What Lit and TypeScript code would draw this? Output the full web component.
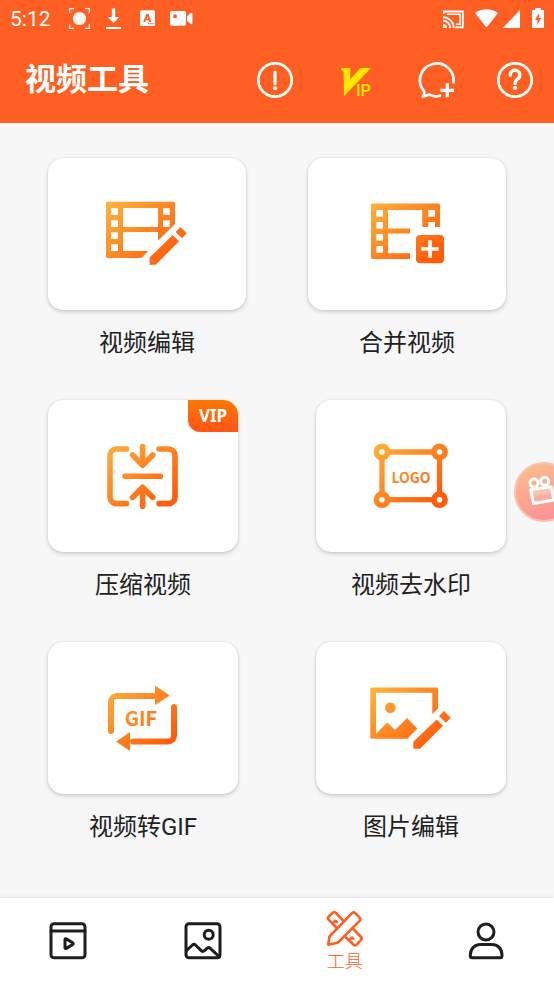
import { LitElement, html, css, svg, nothing } from "lit";
import type { SVGTemplateResult } from "lit";
import { customElement, property, state } from "lit/decorators.js";
import { classMap } from "lit/directives/class-map.js";

interface Tool {
  label: string;
  icon: string;
  vip?: boolean;
}

const TOOL_ROWS: { wide: boolean; tools: Tool[] }[] = [
  { wide: true, tools: [{ label: "视频编辑", icon: "edit" }, { label: "合并视频", icon: "merge" }] },
  { wide: false, tools: [{ label: "压缩视频", icon: "compress", vip: true }, { label: "视频去水印", icon: "logo" }] },
  { wide: false, tools: [{ label: "视频转GIF", icon: "gif" }, { label: "图片编辑", icon: "picture" }] },
];

const TOOL_ICONS: Record<string, SVGTemplateResult> = {
  edit: svg`
    <path fill="url(#g)" fill-rule="evenodd" d="M8.5 7.7H74.5A1.5 1.5 0 0 1 76 9.2V30L59 46.7V38H24V57H49.3L42.3 64H8.5A1.5 1.5 0 0 1 7 62.5V9.2A1.5 1.5 0 0 1 8.5 7.7Z
      M12 14.3V21H19V14.3Z M12 26.3V33H19V26.3Z M12 38.3V45H19V38.3Z M12 50.3V57H19V50.3Z
      M24 14V33H59V14Z M64 14.3V21H70.7V14.3Z M64 26.3V33H70.7V26.3Z"/>
    <path fill="url(#g)" d="M50.7 71V63.5L73.7 41L80 47.3L57 70.5Z M76.7 38L81.3 33L87.7 39.3L83 44.3Z"/>`,
  merge: svg`
    <path fill="url(#g)" fill-rule="evenodd" d="M13.5 9.5H79.5A1.5 1.5 0 0 1 81 11V33H76V28H69.3V33H63.3V16H29V34.500H51V39.600H29V59.300H51V65H13.5A1.5 1.5 0 0 1 12 63.5V11A1.5 1.5 0 0 1 13.5 9.5Z
      M17.3 16V22.7H24V16Z M17.3 28V34.7H24V28Z M17.3 40V46.7H24V40Z M17.3 52V58.7H24V52Z M69.3 16V22.7H76V16Z"/>
    <rect fill="url(#g)" x="57" y="41" width="28" height="28.3" rx="4"/>
    <path stroke="#fff" stroke-width="3.6" d="M62.3 55H79.7M71 46.3V63.7"/>`,
  compress: svg`
    <path fill="none" stroke="url(#g)" stroke-width="5.6" stroke-linecap="round" stroke-linejoin="round"
      d="M31.5 13H21.5A6.5 6.5 0 0 0 15 19.5V61A6.5 6.5 0 0 0 21.5 67.6H31.5M64 13H73.5A6.5 6.5 0 0 1 80 19.5V61A6.5 6.5 0 0 1 73.5 67.6H64
      M47.6 10.5V29M37.5 19L47.6 29.2L57.8 19M30 40.2H65.3M47.6 70.3V51.5M37.5 61.4L47.6 51.3L57.8 61.4"/>`,
  logo: svg`
    <path fill="none" stroke="url(#g)" stroke-width="5.3" d="M24.5 16H71M24.5 63.7H71M19 21.5V58M76.5 21.5V58"/>
    <g fill="none" stroke="url(#g)" stroke-width="5.6">
      <circle cx="19" cy="16" r="5.6"/><circle cx="76.5" cy="16" r="5.6"/>
      <circle cx="19" cy="63.7" r="5.6"/><circle cx="76.5" cy="63.7" r="5.6"/>
    </g>
    <text class="word" x="48" y="47" font-size="14" text-anchor="middle" fill="url(#g)">LOGO</text>`,
  gif: svg`
    <path fill="none" stroke="url(#g)" stroke-width="6" stroke-linecap="round" d="M16 53V24A6 6 0 0 1 22 18H58M79 29V57.500A6 6 0 0 1 73 63.500H38"/>
    <path fill="url(#g)" d="M60 7.500L74.7 17.500L60 27Z M35 54L21 63.500L35 73Z"/>
    <text class="word" x="46" y="48" font-size="20" text-anchor="middle" fill="url(#g)">GIF</text>`,
  picture: svg`
    <g transform="translate(0 0.700)">
      <path fill="url(#g)" fill-rule="evenodd" d="M8.8 8.7H73.5A1.5 1.5 0 0 1 75 10.2V29.7L69.3 35.4V14H13V55L24.3 43.7L32 51.3L44 39.3L54.3 49.7L44.3 60H8.8A1.5 1.5 0 0 1 7.3 58.5V10.2A1.5 1.5 0 0 1 8.8 8.7Z"/>
      <circle fill="url(#g)" cx="27.3" cy="29" r="5.3"/>
      <path fill="url(#g)" d="M50.3 70V63L73.7 40.7L80 47L57 70Z M76 37.3L81 32.3L87.7 39L82.7 44Z"/>
    </g>`,
};

@customElement("tool-tile")
class ToolTile extends LitElement {
  @property({ attribute: false }) tool!: Tool;

  static styles = css`
    :host { display: block; flex: 1; min-width: 0; }
    .tile {
      display: flex; flex-direction: column; align-items: center; gap: 16px;
      width: 100%; padding: 0; border: 0; background: none; cursor: pointer;
      font: inherit; color: #222;
    }
    .card {
      position: relative; display: flex; align-items: center; justify-content: center;
      width: 100%; height: 152px; border-radius: 15px; background: #fff;
      box-shadow: 0 2px 4px rgba(0, 0, 0, 0.16), 0 0 2px rgba(0, 0, 0, 0.12);
    }
    .icon { width: 96px; height: 80px; display: block; }
    .word { font-family: "Noto Sans CJK SC", sans-serif; font-weight: 700; }
    .badge {
      position: absolute; top: 0; right: 0; width: 50px; height: 32px;
      display: flex; align-items: center; justify-content: center;
      border-radius: 0 15px 0 12px; background: linear-gradient(#ff7800, #ff5518);
      color: #fff; font: 700 17px/32px "Noto Sans", sans-serif;
    }
    .label { font-size: 24px; line-height: 34px; white-space: nowrap; }
  `;

  render() {
    return html`
      <button class="tile" type="button">
        <span class="card">
          <svg class="icon" viewBox="0 0 96 80" aria-hidden="true">
            <defs>
              <linearGradient id="g" gradientUnits="userSpaceOnUse" x1="14" y1="8" x2="70" y2="68">
                <stop offset="0" stop-color="#ffb03a"/><stop offset="1" stop-color="#ff5c0c"/>
              </linearGradient>
            </defs>
            ${TOOL_ICONS[this.tool.icon]}
          </svg>
          ${this.tool.vip ? html`<span class="badge">VIP</span>` : nothing}
        </span>
        <span class="label">${this.tool.label}</span>
      </button>`;
  }
}

@customElement("status-bar")
class StatusBar extends LitElement {
  static styles = css`
    :host { display: flex; justify-content: space-between; height: 37px; padding: 0 4px 0 10px; color: #fff; }
    .group { display: flex; align-items: center; gap: 10px; }
    .signals { gap: 4px; }
    .time { min-width: 48px; font: 400 21px/38px Roboto, sans-serif; }
    svg { display: block; height: 24px; fill: currentColor; }
  `;

  render() {
    return html`
      <div class="group">
        <span class="time">5:12</span>
        <svg width="24" viewBox="0 0 24 24">
          <circle cx="11.5" cy="11.5" r="6.6" opacity="0.93"/>
          <path fill="none" stroke="currentColor" stroke-width="1.3" d="M1.6 6V1.6H6M17 1.6H21.4V6M21.4 17V21.4H17M6 21.4H1.6V17"/>
        </svg>
        <svg width="24" viewBox="0 0 24 24">
          <path d="M9.8 1.5H13.2V10H17.2L11.5 16L5.8 10H9.8Z M4 20H19V22H4Z"/>
        </svg>
        <svg width="24" viewBox="0 0 24 24">
          <path fill-rule="evenodd" d="M5.5 3.3H17.5A1.5 1.5 0 0 1 19 4.8V17.5A1.5 1.5 0 0 1 17.5 19H5.5A1.5 1.5 0 0 1 4 17.5V4.8A1.5 1.5 0 0 1 5.5 3.3Z
            M10.3 6.8L7.2 15H9.2L9.8 13.3H12.8L13.4 15H15.4L12.4 6.8Z M11.3 9.2L12.2 11.8H10.4Z
            M12 16V17.3H13.3V16Z M14.3 16V17.3H15.6V16Z M16.5 16V17.3H17.8V16Z"/>
        </svg>
        <svg width="24" viewBox="0 0 24 24">
          <path fill-rule="evenodd" d="M1.5 4H14.5A1.5 1.5 0 0 1 16 5.5V17A1.5 1.5 0 0 1 14.5 18.7H1.5A1.5 1.5 0 0 1 0 17V5.5A1.5 1.5 0 0 1 1.5 4Z
            M5 7.3A2 2 0 1 0 5 11.3A2 2 0 1 0 5 7.3Z"/>
          <path d="M17 9.5L20.5 6Q22.5 5 22.5 7V16Q22.5 18 20.5 17L17 13.5Z"/>
        </svg>
      </div>
      <div class="group signals">
        <svg width="24" viewBox="0 0 24 24">
          <path fill="none" stroke="currentColor" stroke-width="1.9" d="M1.8 7V4.500H20.8V20.2H13.5M1 10.2A10.8 10.8 0 0 1 11.8 21M1 13.8A7.2 7.2 0 0 1 8.2 21"/>
          <path fill="none" stroke="currentColor" stroke-width="1.6" d="M5 7.2H18V17.2H14"/>
          <path d="M1 17A4 4 0 0 1 5 21H1Z"/>
        </svg>
        <svg width="28" viewBox="0 0 28 24">
          <path d="M5 6Q16.5 -1.5 28 6L17.5 19.3Q16.5 20.6 15.5 19.3Z"/>
        </svg>
        <svg width="20" viewBox="0 0 20 24"><path d="M.7 21L18 3V21Z"/></svg>
        <svg width="24" viewBox="0 0 24 24">
          <path fill-rule="evenodd" d="M9 1H15V3H17A1 1 0 0 1 18 4V20A1 1 0 0 1 17 21H7A1 1 0 0 1 6 20V4A1 1 0 0 1 7 3H9Z M13 6L9 13H11.3V18L15.2 11H13Z"/>
        </svg>
      </div>`;
  }
}

interface Tab {
  id: string;
  label: string;
  icon: SVGTemplateResult;
}

const TABS: Tab[] = [
  {
    id: "video", label: "视频",
    icon: svg`<rect x="3" y="2.7" width="34" height="34" rx="3"/><path d="M3 10H37M17 18.6Q17 17.2 18.3 17.9L24.7 21.8Q25.8 22.7 24.7 23.5L18.3 27.4Q17 28 17 26.7Z"/>`,
  },
  {
    id: "image", label: "图片",
    icon: svg`<rect x="3" y="2.7" width="34" height="34" rx="3"/><circle cx="25.7" cy="13.7" r="4.5"/><path d="M3.5 29.5L9.5 24Q11 22.8 12.5 24L18.5 29.8Q20 31 21.2 29.8L24.2 27.2Q25.7 26 27 27.2L36.5 36"/>`,
  },
  {
    id: "tools", label: "工具",
    icon: svg`<path stroke-width="2.6" d="M18.8 13.3L11 5Q9.3 3.2 7.7 4.8L3.8 8.5Q2.2 10.1 3.8 11.8L11.8 20M28.8 21.5L36 29Q37.3 30.4 36 31.9L31.5 36.8Q30 38 28.6 36.8L20.8 29.2
      M27 5.2Q28.7 3.7 30.3 5.2L34.6 9.7Q36 11.3 34.6 12.8L14 33.5Q12.500 35 10.500 35.300L3.200 36.600L4.5 28.500Z M7.5 15.5L10.3 12.8L12 14M24 32.3L27 29.5L28.2 30.7"/>`,
  },
  {
    id: "me", label: "我的",
    icon: svg`<circle cx="20" cy="11" r="8"/><path d="M4.3 34C4.3 27.5 9 23.5 14.5 23.5H25.8C31.5 23.5 36 27.5 36 34V34.7A2 2 0 0 1 34 36.7H6.3A2 2 0 0 1 4.3 34.7Z"/>`,
  },
];

@customElement("app-root")
class AppRoot extends LitElement {
  @state() private active = "tools";

  static styles = css`
    :host {
      position: relative; display: flex; flex-direction: column; min-height: 100vh; overflow: hidden;
      background: #f7f7f7; font-family: Roboto, "Noto Sans CJK SC", sans-serif;
    }
    button { padding: 0; border: 0; background: none; font: inherit; color: inherit; cursor: pointer; }
    svg { display: block; }
    .top { background: #ff5f22; color: #fff; }
    .bar { display: flex; align-items: center; justify-content: space-between; height: 86px; padding: 0 19px 0 25px; }
    .title { margin: 0; font-size: 31px; line-height: 42px; font-weight: 700; }
    .actions { display: flex; gap: 40px; }
    .action { width: 40px; height: 40px; }
    .line { fill: none; stroke: currentColor; stroke-width: 2.7; stroke-linecap: round; stroke-linejoin: round; }
    .vip { fill: #ffe600; }
    .vip text { font: 500 16px Roboto, sans-serif; }
    .content { flex: 1; display: flex; flex-direction: column; gap: 40px; padding: 35px 48px; }
    .row { display: flex; gap: 78px; }
    .row.wide { gap: 62px; }
    .float {
      position: absolute; top: 50%; right: -20px; width: 60px; height: 60px; margin-top: -30px;
      border-radius: 50%; border: 2px solid #fac3ad; box-sizing: border-box;
      background: linear-gradient(160deg, #fbbb8c 10%, #fa9296 90%);
    }
    .tabs { display: flex; height: 86px; background: #fff; box-shadow: 0 0 4px rgba(0, 0, 0, 0.14); color: #1d1d1f; }
    .tab { flex: 11; display: flex; flex-direction: column; align-items: center; justify-content: center; gap: 2px; }
    .tab.active { flex: 12; color: #ff5f22; }
    .tab svg { fill: none; stroke: currentColor; stroke-width: 3; stroke-linecap: round; stroke-linejoin: round; }
    .tab-label { font-size: 18px; line-height: 24px; font-weight: 300; }
  `;

  render() {
    return html`
      <header class="top">
        <status-bar></status-bar>
        <div class="bar">
          <h1 class="title">视频工具</h1>
          <div class="actions">
            <button class="action" type="button" aria-label="提示">
              <svg width="40" height="40" viewBox="0 0 40 40">
                <circle class="line" cx="20" cy="20" r="16.7"/>
                <path fill="none" stroke="#fff" stroke-width="3.2" stroke-linecap="round" d="M20 12.3V23.7"/><circle cx="20" cy="28.3" r="2" fill="#fff"/>
              </svg>
            </button>
            <button class="action" type="button" aria-label="VIP">
              <svg class="vip" width="40" height="40" viewBox="0 0 40 40">
                <path d="M6.3 8H15.3V19.3L25.5 8H36L9 36.3L8.6 11.5L6.3 10.3Z"/>
                <text x="21" y="36">IP</text>
              </svg>
            </button>
            <button class="action" type="button" aria-label="反馈">
              <svg width="40" height="40" viewBox="0 0 40 40">
                <path class="line" d="M38.4 22.5A16.8 16.8 0 1 0 9.3 31.5C9.6 33.5 8.6 35.3 7.8 36.5C10.5 36.5 12 35 14.5 34.6C17.5 36.3 21 36.9 25 35.7"/>
                <path fill="none" stroke="#fff" stroke-width="3.2" d="M25.5 30.3H39M32.3 23.3V37.3"/>
              </svg>
            </button>
            <button class="action" type="button" aria-label="帮助">
              <svg width="40" height="40" viewBox="0 0 40 40">
                <circle class="line" cx="20" cy="20" r="16.7"/>
                <path fill="none" stroke="#fff" stroke-width="3.4" stroke-linecap="round" d="M15.2 15.2A4.8 4.8 0 1 1 22.6 19C21 20.2 20 21 20 23.5"/>
                <circle cx="20" cy="28" r="2.1" fill="#fff"/>
              </svg>
            </button>
          </div>
        </div>
      </header>
      <main class="content">
        ${TOOL_ROWS.map((row) => html`
          <div class=${classMap({ row: true, wide: row.wide })}>
            ${row.tools.map((tool) => html`<tool-tile .tool=${tool}></tool-tile>`)}
          </div>`)}
      </main>
      <nav class="tabs">
        ${TABS.map((tab) => html`
          <button type="button" class=${classMap({ tab: true, active: tab.id === this.active })}
            aria-label=${tab.label} @click=${() => (this.active = tab.id)}>
            <svg width="40" height="40" viewBox="0 0 40 40">${tab.icon}</svg>
            ${tab.id === this.active ? html`<span class="tab-label">${tab.label}</span>` : nothing}
          </button>`)}
      </nav>
      <button class="float" type="button" aria-label="录屏">
        <svg width="56" height="56" viewBox="2 2 56 56" fill="none" stroke="#fff" stroke-width="3" stroke-linejoin="round">
          <circle cx="20" cy="21" r="4"/><circle cx="30.7" cy="19.3" r="4"/>
          <path fill="#ffffff" fill-opacity="0.12" d="M16.7 27.8L37.3 24.8L39.7 38L19.5 41.5Z"/>
          <path stroke="none" fill="#fff" fill-opacity="0.2" d="M18.5 28.5L37 26L38 32L19.5 35Z"/>
        </svg>
      </button>`;
  }
}
